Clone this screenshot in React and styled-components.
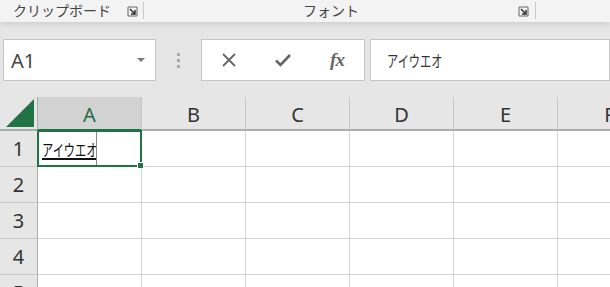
import styled, { createGlobalStyle } from "styled-components";

const GlobalStyle = createGlobalStyle`
  html, body { margin: 0; padding: 0; background: #e6e6e6; overflow: hidden; }
  body { font-family: "Noto Sans", "Noto Sans CJK JP", sans-serif; }
`;

const Page = styled.div`
  width: 610px;
  height: 287px;
  overflow: hidden;
  background: #e6e6e6;
`;

const Ribbon = styled.div`
  display: flex;
  height: 22px;
  background: #f3f3f3;
  box-shadow: 0 2px 6px rgba(0, 0, 0, 0.12);
  position: relative;
  z-index: 1;
`;

const Group = styled.div`
  display: flex;
  align-items: center;
  width: ${(p) => p.width}px;
  padding-left: ${(p) => p.pad}px;
  box-sizing: border-box;
  border-right: 1px solid #c8c8c8;
  height: 17px;
  margin-top: 2px;
`;

const GroupLabel = styled.span`
  flex: 1;
  font-family: "Noto Sans CJK JP", sans-serif;
  font-size: 14px;
  color: #444;
  text-align: ${(p) => p.align || "left"};
  line-height: 17px;
  margin-top: -1px;
`;

const Launcher = styled.svg`
  width: 11px;
  height: 11px;
  margin-right: ${(p) => p.mr}px;
  margin-top: 1px;
`;

const FormulaArea = styled.div`
  display: flex;
  align-items: stretch;
  height: 42px;
  padding: 17px 0 16px 3px;
`;

const Box = styled.div`
  display: flex;
  align-items: center;
  background: #fff;
  border: 1px solid #c6c6c6;
  box-sizing: border-box;
  width: ${(p) => (p.width ? `${p.width}px` : "auto")};
  flex: ${(p) => (p.width ? "none" : 1)};
  margin-left: ${(p) => p.ml || 0}px;
`;

const NameText = styled.span`
  flex: 1;
  padding-left: 7px;
  font-size: 20px;
  color: #444;
`;

const Caret = styled.span`
  width: 0;
  height: 0;
  border-left: 4px solid transparent;
  border-right: 4px solid transparent;
  border-top: 4px solid #777;
  margin-right: 10px;
`;

const Dots = styled.div`
  width: 45px;
  display: flex;
  flex-direction: column;
  align-items: center;
  justify-content: center;
  gap: 3px;
  span {
    width: 3px;
    height: 3px;
    background: #aaa;
  }
`;

const FxButton = styled.div`
  width: 54px;
  display: flex;
  align-items: center;
  justify-content: center;
  color: #666;
`;

const FxText = styled.span`
  font-family: "Liberation Serif", serif;
  font-style: italic;
  font-weight: bold;
  font-size: 19px;
  color: #666;
  letter-spacing: -1px;
`;

/* katakana in the reference is a narrow proportional face */
const Narrow = styled.span`
  display: inline-block;
  white-space: nowrap;
  font-family: "Noto Sans CJK JP", sans-serif;
  font-size: 16px;
  transform: scaleX(0.7);
  transform-origin: left center;
`;

const FormulaText = styled(Narrow)`
  margin-left: 16px;
  color: #333;
`;

const Grid = styled.div`
  display: grid;
  grid-template-columns: 38px repeat(6, 104px);
  grid-template-rows: 34px repeat(5, 36px);
  background: #fff;
`;

const Corner = styled.div`
  background: #e6e6e6;
  border-bottom: 2px solid #ababab;
  border-right: 1px solid #ababab;
  box-sizing: border-box;
  display: flex;
  align-items: flex-end;
  justify-content: flex-end;
  padding: 0 3px 2px 0;
`;

const ColHead = styled.div`
  background: ${(p) => (p.active ? "#d2d2d2" : "#e6e6e6")};
  border-right: 1px solid #c8c8c8;
  border-bottom: 2px solid ${(p) => (p.active ? "#217346" : "#ababab")};
  box-sizing: border-box;
  display: flex;
  align-items: center;
  justify-content: center;
  font-size: 20px;
  color: ${(p) => (p.active ? "#1e6b41" : "#333")};
  padding-top: 2px;
`;

const RowHead = styled.div`
  background: #e6e6e6;
  border-right: 1px solid #ababab;
  border-bottom: 1px solid #c8c8c8;
  box-sizing: border-box;
  display: flex;
  align-items: center;
  justify-content: center;
  font-size: 20px;
  color: #333;
`;

const Cell = styled.div`
  border-right: 1px solid #d4d4d4;
  border-bottom: 1px solid #d4d4d4;
  box-sizing: border-box;
  position: relative;
`;

const ActiveCell = styled.div`
  position: absolute;
  left: -1px;
  top: -1px;
  right: -1px;
  bottom: -1px;
  border: 2px solid #217346;
  z-index: 2;
  display: flex;
  align-items: center;
`;

const Editor = styled.div`
  width: 58px;
  flex: none;
  height: 100%;
  box-sizing: border-box;
  border-right: 1px solid #888;
  display: flex;
  align-items: center;
  padding-left: 3px;
  overflow: hidden;
`;

const EditText = styled(Narrow)`
  color: #111;
  line-height: 18px;
  margin-top: 1px;
  text-decoration: underline;
  text-decoration-thickness: 2px;
  text-underline-offset: 2px;
`;

const Handle = styled.span`
  position: absolute;
  right: -4px;
  bottom: -4px;
  width: 5px;
  height: 5px;
  background: #217346;
  border: 1px solid #fff;
`;

const LauncherIcon = ({ mr }) => (
  <Launcher mr={mr} viewBox="0 0 11 11">
    <path d="M1 1h9v9" fill="none" stroke="#666" strokeWidth="1" />
    <path d="M1 1v9h9" fill="none" stroke="#666" strokeWidth="1" />
    <path d="M3 3l4.5 4.5M8 4v4H4" fill="none" stroke="#333" strokeWidth="1.5" />
  </Launcher>
);

const cols = ["A", "B", "C", "D", "E", "F"];
const rows = [1, 2, 3, 4, 5];

export default function App() {
  return (
    <Page>
      <GlobalStyle />
      <Ribbon>
        <Group width={144} pad={13}>
          <GroupLabel>クリップボード</GroupLabel>
          <LauncherIcon mr={5} />
        </Group>
        <Group width={392} pad={0}>
          <GroupLabel align="center">フォント</GroupLabel>
          <LauncherIcon mr={6} />
        </Group>
      </Ribbon>
      <FormulaArea>
        <Box width={153}>
          <NameText>A1</NameText>
          <Caret />
        </Box>
        <Dots>
          <span />
          <span />
          <span />
        </Dots>
        <Box width={164}>
          <FxButton>
            <svg width="16" height="16" viewBox="0 0 16 16">
              <path d="M2 2l12 12M14 2L2 14" stroke="#666" strokeWidth="1.8" />
            </svg>
          </FxButton>
          <FxButton>
            <svg width="18" height="16" viewBox="0 0 18 16">
              <path d="M2 8.5l4.5 4.5L16 3" fill="none" stroke="#666" strokeWidth="2.6" />
            </svg>
          </FxButton>
          <FxButton>
            <FxText>fx</FxText>
          </FxButton>
        </Box>
        <Box ml={5}>
          <FormulaText>アイウエオ</FormulaText>
        </Box>
      </FormulaArea>
      <Grid>
        <Corner>
          <svg width="28" height="28" viewBox="0 0 28 28">
            <path d="M28 0V28H0Z" fill="#217346" />
          </svg>
        </Corner>
        {cols.map((c) => (
          <ColHead key={c} active={c === "A"}>
            {c}
          </ColHead>
        ))}
        {rows.map((r) => [
          <RowHead key={`h${r}`}>{r}</RowHead>,
          ...cols.map((c) => (
            <Cell key={`${c}${r}`}>
              {r === 1 && c === "A" && (
                <ActiveCell>
                  <Editor>
                    <EditText>アイウエオ</EditText>
                  </Editor>
                  <Handle />
                </ActiveCell>
              )}
            </Cell>
          )),
        ])}
      </Grid>
    </Page>
  );
}
